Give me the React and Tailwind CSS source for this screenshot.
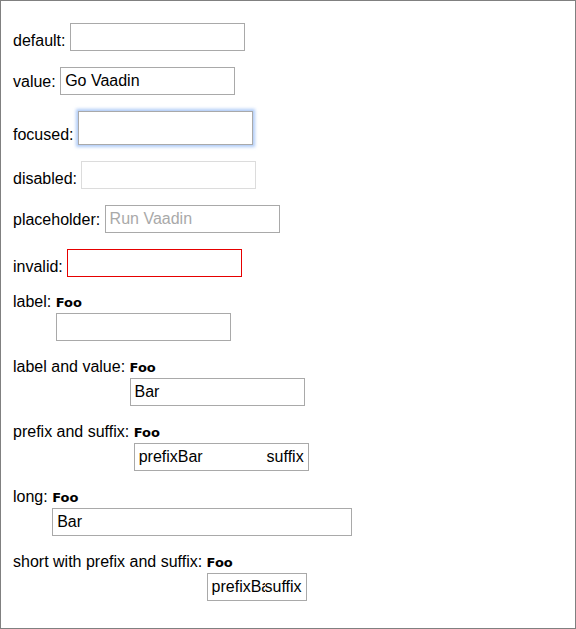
const field = "h-[28px] border bg-white px-[4px] text-[16px] text-black outline-none font-['Liberation_Sans',Arial,sans-serif]";

function Row({ label, children, filled, className = "mb-4" }) {
  return (
    <div className={`flex items-end ${className}`}>
      <span className={`mr-[4.45px] leading-[18px] ${filled ? "mb-[4.5px]" : "mb-[1.5px]"}`}>{label}</span>
      {children}
    </div>
  );
}

function LabeledRow({ label, width = "w-[175px]", children }) {
  return (
    <div className="mb-4 flex items-baseline">
      <span className="mr-[4.45px] leading-[18px]">{label}</span>
      <div className="flex flex-col">
        <span className="text-[13px] font-bold leading-[21px] font-['DejaVu_Sans',Verdana,sans-serif]">Foo</span>
        <div className={width}>{children}</div>
      </div>
    </div>
  );
}

function AffixField({ value, width }) {
  return (
    <div className={`flex h-[28px] items-center border border-[#a9a9a9] bg-white px-[4px] text-[16px] ${width}`}>
      <span className="shrink-0 leading-[18px]">prefix</span>
      <input readOnly value={value} className="h-full min-w-0 flex-1 bg-transparent text-black outline-none" />
      <span className="shrink-0 leading-[18px]">suffix</span>
    </div>
  );
}

export default function App() {
  return (
    <div className="h-[629px] w-[576px] overflow-hidden border border-[#808080] bg-white pl-3 pt-[22px] text-[16px] text-black font-['Liberation_Sans',Arial,sans-serif]">
      <Row label="default:">
        <input readOnly className={`${field} w-[175px] border-[#a9a9a9]`} />
      </Row>
      <Row label="value:" filled>
        <input readOnly value="Go Vaadin" className={`${field} w-[175px] border-[#a9a9a9]`} />
      </Row>
      <Row label="focused:">
        <input
          readOnly
          className={`${field} h-[34px] w-[175px] border-[#a9a9a9] shadow-[0_0_3px_2px_rgba(110,160,240,0.55)]`}
        />
      </Row>
      <Row label="disabled:">
        <input disabled className={`${field} w-[175px] border-[#dcdcdc]`} />
      </Row>
      <Row label="placeholder:" filled>
        <input
          readOnly
          placeholder="Run Vaadin"
          className={`${field} w-[175px] border-[#a9a9a9] placeholder:text-[#a9a9a9]`}
        />
      </Row>
      <Row label="invalid:" className="mb-[15px]">
        <input readOnly className={`${field} w-[175px] border-[#e60000]`} />
      </Row>

      <LabeledRow label="label:">
        <input readOnly className={`${field} w-full border-[#a9a9a9]`} />
      </LabeledRow>
      <LabeledRow label="label and value:">
        <input readOnly value="Bar" className={`${field} w-full border-[#a9a9a9]`} />
      </LabeledRow>
      <LabeledRow label="prefix and suffix:">
        <AffixField value="Bar" width="w-full" />
      </LabeledRow>
      <LabeledRow label="long:" width="w-[300px]">
        <input readOnly value="Bar" className={`${field} w-full border-[#a9a9a9]`} />
      </LabeledRow>
      <LabeledRow label="short with prefix and suffix:" width="w-[100px]">
        <AffixField value="Bar" width="w-full" />
      </LabeledRow>
    </div>
  );
}
